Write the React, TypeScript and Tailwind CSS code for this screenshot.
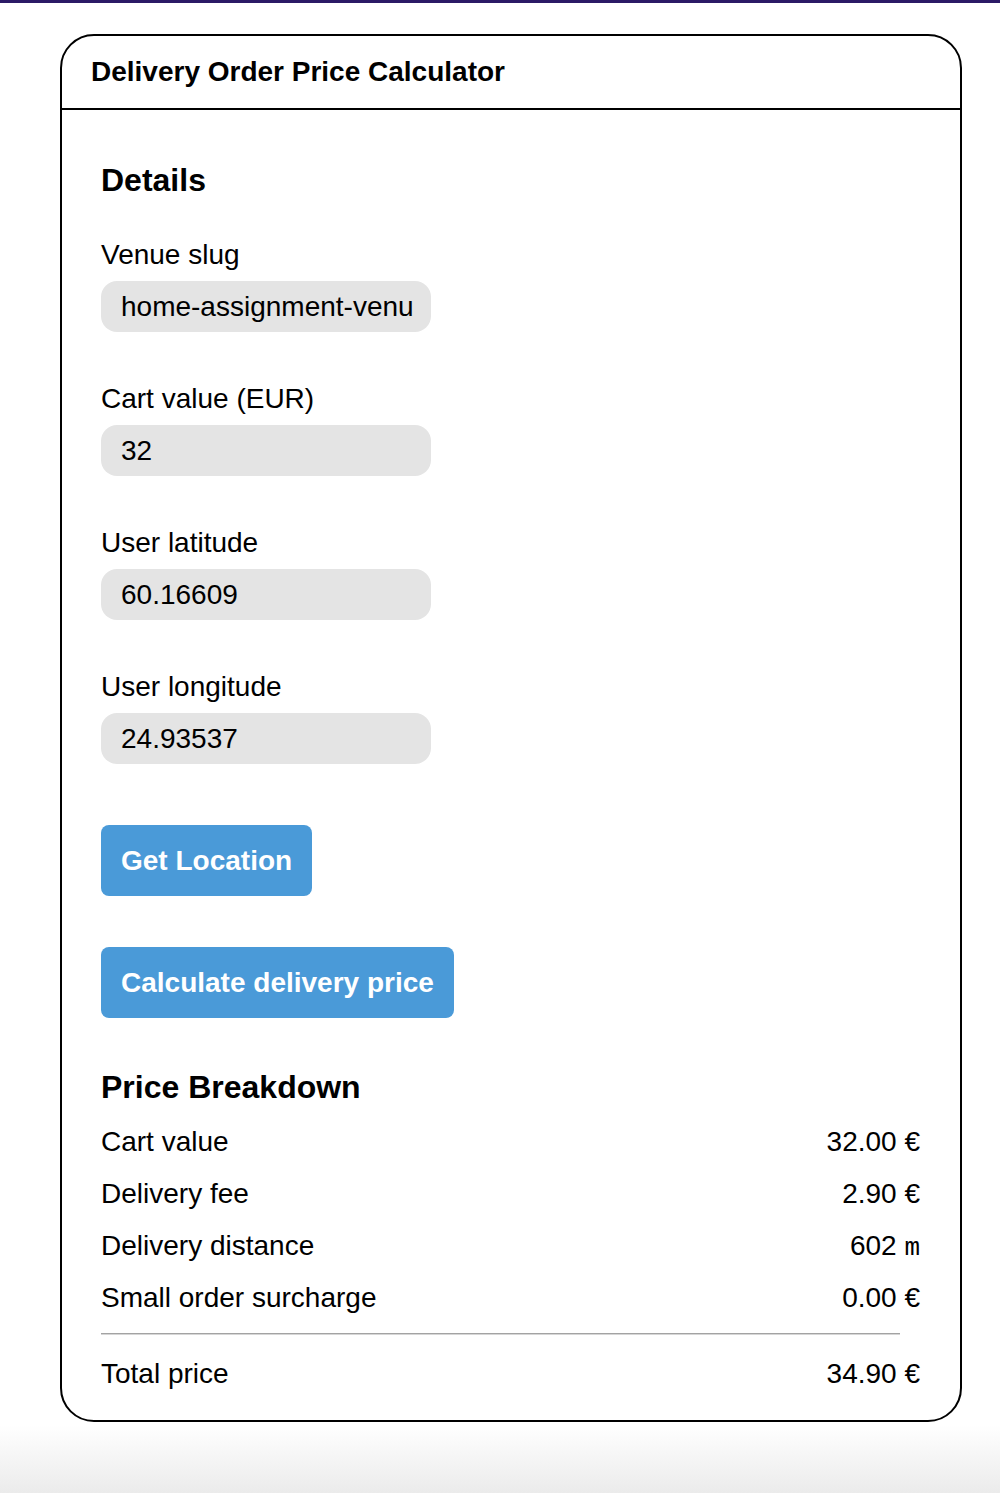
const Field = ({ label, value }: { label: string; value: string }) => {
  return (
    <div className="flex flex-col">
      <label className="text-[28px] leading-[32px] text-black">{label}</label>
      <div className="mt-[10px] w-[330px] h-[51px] rounded-[16px] bg-[#e4e4e4] pl-[20px] flex items-center text-[28px] text-black">
        {value}
      </div>
    </div>
  )
}

const Row = ({ label, children }: { label: string; children: React.ReactNode }) => {
  return (
    <div className="h-[52px] flex justify-between items-center text-[28px] text-black">
      <span>{label}</span>
      <span>{children}</span>
    </div>
  )
}

export default function App() {
  return (
    <div className="min-h-[1493px] w-[1000px] bg-[linear-gradient(to_bottom,#ffffff_0px,#ffffff_1425px,#ebebeb_1493px)] font-['Liberation_Sans',Arial,sans-serif]">
      <div className="h-[3px] bg-[#2b1a66]"></div>

      {/* card */}
      <div className="ml-[60px] mt-[31px] w-[902px] border-2 border-black rounded-[34px] bg-white overflow-hidden">
        <div className="h-[74px] flex items-center pl-[29px] border-b-2 border-black">
          <h1 className="text-[28px] font-bold text-black">Delivery Order Price Calculator</h1>
        </div>

        <div className="pl-[39px] pr-[40px] pt-[52px] pb-[20px]">
          <h2 className="text-[32px] leading-[36px] font-bold text-black">Details</h2>

          <div className="mt-[41px] flex flex-col gap-[51px]">
            <Field label="Venue slug" value="home-assignment-venu" />
            <Field label="Cart value (EUR)" value="32" />
            <Field label="User latitude" value="60.16609" />
            <Field label="User longitude" value="24.93537" />
          </div>

          <div className="mt-[61px] flex flex-col items-start gap-[51px]">
            <button className="h-[71px] px-[20px] rounded-[8px] bg-[#4a9ad8] text-white text-[28px] font-bold">
              Get Location
            </button>
            <button className="h-[71px] px-[20px] rounded-[8px] bg-[#4a9ad8] text-white text-[28px] font-bold">
              Calculate delivery price
            </button>
          </div>

          {/* price breakdown */}
          <h2 className="mt-[51px] text-[32px] leading-[36px] font-bold text-black">Price Breakdown</h2>
          <div className="mt-[11px]">
            <Row label="Cart value">32.00 €</Row>
            <Row label="Delivery fee">2.90 €</Row>
            <Row label="Delivery distance">
              602 <span className="font-['Liberation_Mono',monospace] text-[26px]">m</span>
            </Row>
            <Row label="Small order surcharge">0.00 €</Row>
          </div>
          <div className="mt-[9px] mr-[20px] h-[2px] bg-[#a3a3a3] border-b border-[#d6d6d6]"></div>
          <div className="mt-[13px]">
            <Row label="Total price">34.90 €</Row>
          </div>
        </div>
      </div>
    </div>
  )
}
